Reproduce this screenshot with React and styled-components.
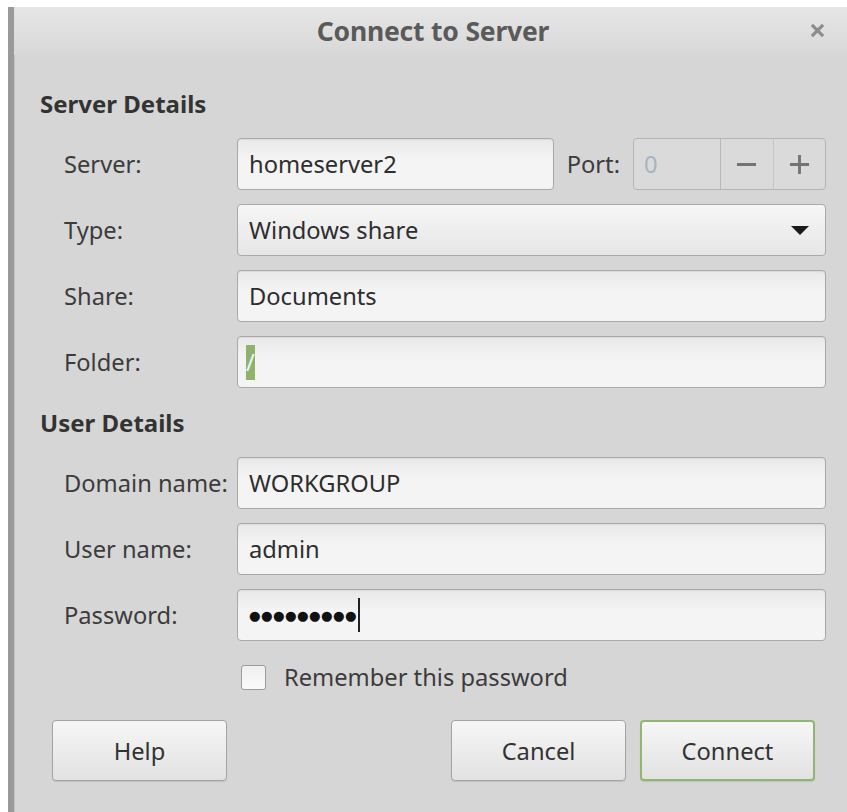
import styled, { createGlobalStyle } from "styled-components";

const GlobalStyle = createGlobalStyle`
  html, body {
    margin: 0;
    padding: 0;
    background: #ffffff;
  }
  body {
    font-family: "Noto Sans", "DejaVu Sans", sans-serif;
    color: #3c3c3c;
  }
`;

export default function App() {
  return (
    <>
      <GlobalStyle />
      <Window>
        <TitleBar>
          <Title>Connect to Server</Title>
          <Close viewBox="0 0 16 16">
            <path d="M2 2 L14 14 M14 2 L2 14" />
          </Close>
        </TitleBar>
        <Body>
          <Section>Server Details</Section>
          <Form>
            <Label>Server:</Label>
            <ServerRow>
              <Entry grow>homeserver2</Entry>
              <Label>Port:</Label>
              <Spin>
                <SpinEntry>0</SpinEntry>
                <SpinButton>
                  <SpinGlyph viewBox="0 0 22 22">
                    <path d="M1 11 H21" />
                  </SpinGlyph>
                </SpinButton>
                <SpinButton>
                  <SpinGlyph viewBox="0 0 22 22">
                    <path d="M1 11 H21 M11 1 V21" />
                  </SpinGlyph>
                </SpinButton>
              </Spin>
            </ServerRow>

            <Label>Type:</Label>
            <Combo>
              Windows share
              <Arrow />
            </Combo>

            <Label>Share:</Label>
            <Entry>Documents</Entry>

            <Label>Folder:</Label>
            <Entry>
              <Selected>/</Selected>
            </Entry>
          </Form>

          <Section>User Details</Section>
          <Form>
            <Label>Domain name:</Label>
            <Entry>WORKGROUP</Entry>

            <Label>User name:</Label>
            <Entry>admin</Entry>

            <Label>Password:</Label>
            <Entry>
              <Dots>●●●●●●●●●</Dots>
              <Caret />
            </Entry>
          </Form>

          <CheckRow>
            <Check />
            <span>Remember this password</span>
          </CheckRow>

          <Buttons>
            <Button>Help</Button>
            <Spacer />
            <Button>Cancel</Button>
            <Button primary>Connect</Button>
          </Buttons>
        </Body>
      </Window>
    </>
  );
}

const Window = styled.div`
  margin: 7px 0 0 8px;
  height: 805px;
  background: #d6d6d6;
  border-left: 6px solid #9a9a9a;
  box-shadow: inset 1px 0 0 #c4c4c4;
  box-sizing: border-box;
  overflow: hidden;
`;

const TitleBar = styled.div`
  position: relative;
  height: 48px;
  display: flex;
  align-items: center;
  justify-content: center;
  background: linear-gradient(#e6e6e6, #d8d8d8);
`;

const Title = styled.div`
  font-weight: bold;
  font-size: 26.5px;
  letter-spacing: -0.2px;
  color: #5a5a5a;
  margin-left: 5px;
`;

const Close = styled.svg`
  position: absolute;
  right: 22px;
  top: 16px;
  width: 15px;
  height: 15px;
  fill: none;
  stroke: #8c8c8c;
  stroke-width: 3.4;
`;

const Body = styled.div`
  padding: 34px 21px 0 26px;
`;

const Section = styled.div`
  font-weight: bold;
  font-size: 24px;
  color: #333;
  line-height: 30px;
  margin-bottom: 19px;
`;

const Form = styled.div`
  display: grid;
  grid-template-columns: 173px 1fr;
  row-gap: 14px;
  margin-left: 24px;
  margin-bottom: 20px;
  align-items: center;
`;

const Label = styled.div`
  font-size: 23.7px;
  color: #3c3c3c;
  white-space: nowrap;
`;

const ServerRow = styled.div`
  display: flex;
  align-items: center;
  gap: 13px;
`;

const Entry = styled.div`
  ${(p) => (p.grow ? "flex: 1;" : "")}
  height: 52px;
  box-sizing: border-box;
  display: flex;
  align-items: center;
  padding: 0 11px;
  font-size: 23.7px;
  color: #2e2e2e;
  border: 1px solid #a9a9a9;
  border-radius: 4px;
  background: linear-gradient(#e8e8e8, #f4f4f4 40%, #f4f4f4);
  box-shadow: inset 0 1px 1px rgba(0, 0, 0, 0.06);
`;

const Selected = styled.span`
  display: inline-block;
  width: 9px;
  margin-left: -3px;
  text-align: center;
  background: #8fb36b;
  color: #e8f6ff;
  line-height: 35px;
`;

const Dots = styled.span`
  font-size: 13.3px;
  letter-spacing: 0.4px;
  color: #111;
`;

const Caret = styled.span`
  width: 2px;
  height: 34px;
  background: #222;
  margin-left: 1px;
`;

const Spin = styled.div`
  display: flex;
  width: 193px;
  height: 52px;
  box-sizing: border-box;
  border: 1px solid #b4b4b4;
  border-radius: 4px;
  background: #dadada;
  overflow: hidden;
`;

const SpinEntry = styled.div`
  width: 87px;
  display: flex;
  align-items: center;
  padding-left: 10px;
  box-sizing: border-box;
  font-size: 23.7px;
  color: #a6b4c4;
  border-right: 1px solid #b8b8b8;
`;

const SpinButton = styled.div`
  flex: 1;
  display: flex;
  align-items: center;
  justify-content: center;
  & + & {
    border-left: 1px solid #c4c4c4;
  }
`;

const SpinGlyph = styled.svg`
  width: 21px;
  height: 21px;
  fill: none;
  stroke: #737373;
  stroke-width: 3;
`;

const Combo = styled.div`
  height: 52px;
  box-sizing: border-box;
  display: flex;
  align-items: center;
  justify-content: space-between;
  padding: 0 16px 0 11px;
  font-size: 23.7px;
  color: #2e2e2e;
  border: 1px solid #a9a9a9;
  border-radius: 4px;
  background: linear-gradient(#f6f6f6, #e6e6e6);
`;

const Arrow = styled.span`
  width: 0;
  height: 0;
  border-left: 9px solid transparent;
  border-right: 9px solid transparent;
  border-top: 9px solid #1a1a1a;
`;

const CheckRow = styled.div`
  display: flex;
  align-items: center;
  gap: 18px;
  margin: 12px 0 0 201px;
  font-size: 23.7px;
  color: #3c3c3c;
`;

const Check = styled.span`
  width: 25px;
  height: 25px;
  box-sizing: border-box;
  border: 1px solid #9c9c9c;
  border-radius: 3px;
  background: linear-gradient(#f0f0f0, #fafafa);
`;

const Buttons = styled.div`
  display: flex;
  gap: 14px;
  margin: 27px 11px 0 12px;
`;

const Spacer = styled.div`
  flex: 1;
`;

const Button = styled.div`
  width: 175px;
  height: 61px;
  box-sizing: border-box;
  display: flex;
  align-items: center;
  justify-content: center;
  font-size: 23.7px;
  color: #333;
  border-radius: 4px;
  border: ${(p) => (p.primary ? "2px solid #91b672" : "1px solid #a4a4a4")};
  background: linear-gradient(#f6f6f6, #e2e2e2);
  box-shadow: 0 1px 1px rgba(0, 0, 0, 0.1);
`;
